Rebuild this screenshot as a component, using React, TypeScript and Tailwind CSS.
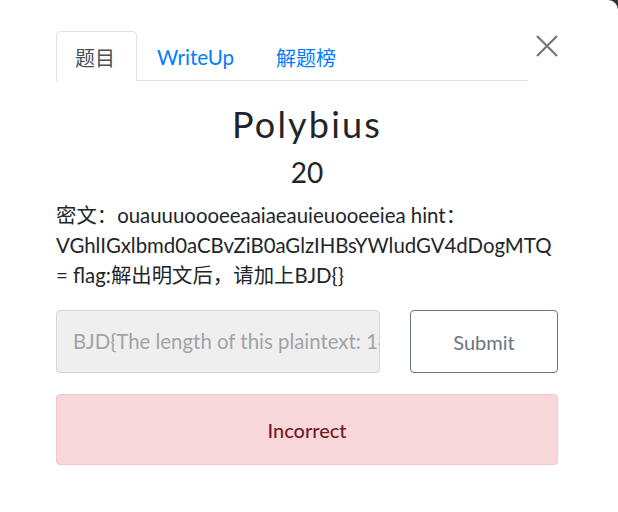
export default function App() {
  return (
    <div className="w-[618px] h-[512px] bg-[#333] overflow-hidden">
      <div
        className="w-full h-full bg-white rounded-tr-[10px] text-[#212529]"
        style={{ fontFamily: 'Lato, "Noto Sans CJK SC", sans-serif' }}
      >
        <div className="pl-[56px] pr-[60px] pt-[31px]">
          <div className="flex items-start">
            <div className="flex-1 flex border-b border-[#dee2e6] h-[50px]">
              <div className="h-[51px] pl-[18px] pr-[21px] pt-[3px] flex items-center border border-[#dee2e6] border-b-white rounded-t-[5px] bg-white text-[#495057] text-[20px]">
                题目
              </div>
              <div className="h-[50px] pl-[20px] pr-[21px] pt-[3px] flex items-center text-[#007bff] text-[20.6px]">WriteUp</div>
              <div className="h-[50px] pl-[21px] pt-[3px] flex items-center text-[#007bff] text-[20px]">解题榜</div>
            </div>
            <div className="w-[30px] flex justify-end pt-[4px]">
              <svg width="22" height="22" viewBox="0 0 22 22" className="text-[#777]">
                <path d="M1 1 L21 21 M21 1 L1 21" stroke="currentColor" strokeWidth="2.3" fill="none" />
              </svg>
            </div>
          </div>
        </div>
        <div className="pl-[56px] pr-[60px]">
          <div className="text-center text-[36px] leading-[40px] tracking-[2.2px] mt-[23px]">Polybius</div>
          <div className="text-center text-[28px] leading-[34px] mt-[11px]">20</div>
          <div className="text-[20.4px] leading-[30px] mt-[11px] break-words">
            密文：ouauuuoooeeaaiaeauieuooeeiea hint：VGhlIGxlbmd0aCBvZiB0aGlzIHBsYWludGV4dDogMTQ= flag:解出明文后，请加上BJD{'{}'}
          </div>
          <div className="flex gap-[30px] mt-[20px]">
            <div className="w-[324px] h-[63px] bg-[#efefef] border border-[#ced4da] rounded-[4px] px-[16px] flex items-center overflow-hidden whitespace-nowrap text-[20.4px] text-[#a3a3a3]">
              BJD{'{'}The length of this plaintext: 14{'}'}
            </div>
            <div className="flex-1 h-[63px] border border-[#6c757d] rounded-[4px] flex items-center justify-center text-[20px] text-[#6c757d]">
              Submit
            </div>
          </div>
          <div className="mt-[21px] h-[71px] bg-[#f8d7da] border border-[#f5c6cb] rounded-[4px] flex items-center justify-center text-[20px] text-[#721c24] font-medium">
            Incorrect
          </div>
        </div>
      </div>
    </div>
  );
}
